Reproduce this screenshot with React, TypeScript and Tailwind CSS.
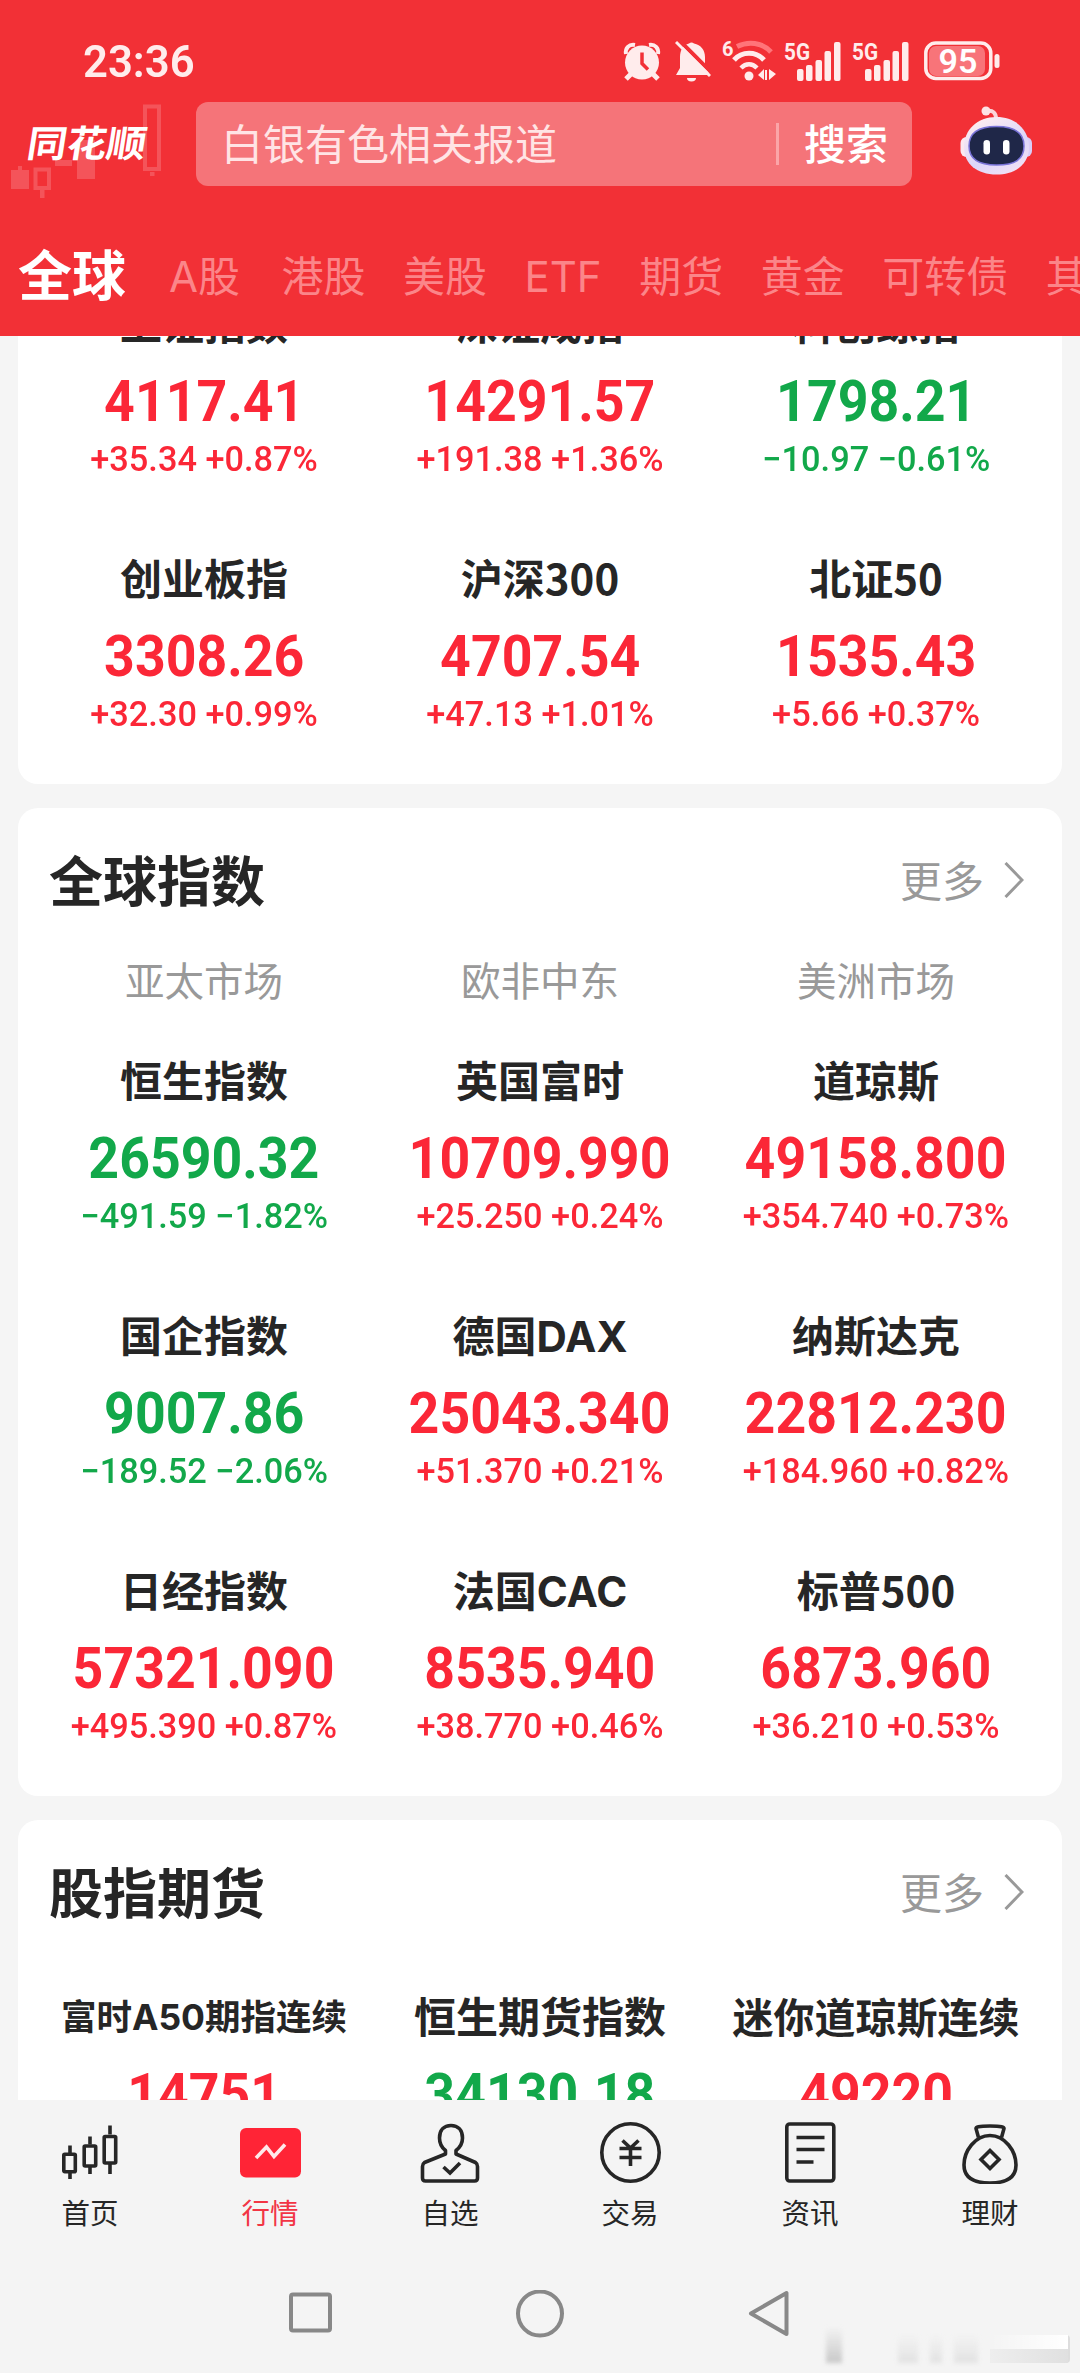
import React from 'react';

type Quote = {
  name: string;
  value: string;
  change: string;
  down?: boolean;
  nameClass?: string;
};

const domesticIndices: Quote[] = [
  { name: '上证指数', value: '4117.41', change: '+35.34 +0.87%' },
  { name: '深证成指', value: '14291.57', change: '+191.38 +1.36%' },
  { name: '科创综指', value: '1798.21', change: '−10.97 −0.61%', down: true },
  { name: '创业板指', value: '3308.26', change: '+32.30 +0.99%' },
  { name: '沪深300', value: '4707.54', change: '+47.13 +1.01%' },
  { name: '北证50', value: '1535.43', change: '+5.66 +0.37%' }
];

const globalIndices: Quote[] = [
  { name: '恒生指数', value: '26590.32', change: '−491.59 −1.82%', down: true },
  { name: '英国富时', value: '10709.990', change: '+25.250 +0.24%' },
  { name: '道琼斯', value: '49158.800', change: '+354.740 +0.73%' },
  { name: '国企指数', value: '9007.86', change: '−189.52 −2.06%', down: true },
  {
    name: '德国DAX',
    value: '25043.340',
    change: '+51.370 +0.21%',
    nameClass: "text-[42px] leading-[62px] font-['Inter','Noto_Sans_CJK_SC',sans-serif]"
  },
  { name: '纳斯达克', value: '22812.230', change: '+184.960 +0.82%' },
  { name: '日经指数', value: '57321.090', change: '+495.390 +0.87%' },
  {
    name: '法国CAC',
    value: '8535.940',
    change: '+38.770 +0.46%',
    nameClass: "text-[42px] leading-[62px] font-['Inter','Noto_Sans_CJK_SC',sans-serif]"
  },
  { name: '标普500', value: '6873.960', change: '+36.210 +0.53%' }
];

const futures: Quote[] = [
  {
    name: '富时A50期指连续',
    value: '14751',
    change: '',
    nameClass: "text-[35.5px] leading-[62px] font-['Inter','Noto_Sans_CJK_SC',sans-serif]"
  },
  { name: '恒生期货指数', value: '34130.18', change: '', down: true },
  { name: '迷你道琼斯连续', value: '49220', change: '', nameClass: 'text-[41px] leading-[56px]' }
];

const markets = ['亚太市场', '欧非中东', '美洲市场'];

const categories = ['A股', '港股', '美股', 'ETF', '期货', '黄金', '可转债', '其他'];

const AlarmIcon: React.FC = () => (
  <svg className="w-[38px] h-10 shrink-0" viewBox="0 0 38 40" fill="none">
    <circle cx="19" cy="21.500" r="17" fill="#ffecec" />
    <path d="M3 13C2 7 6 3 12 4M35 13C36 7 32 3 26 4" stroke="#ffecec" strokeWidth="4" />
    <path d="M8 33l-5 5M30 33l5 5" stroke="#ffecec" strokeWidth="5" />
    <path d="M19 11.500v11l6 6" stroke="#f23036" strokeWidth="3.500" />
  </svg>
);

const MutedBellIcon: React.FC = () => (
  <svg className="w-9 h-[42px] shrink-0" viewBox="0 0 36 42" fill="none">
    <path d="M14 3.500a3.500 3 0 0 1 5 0C26 5 30 10 30 17v9l5 9H1l4-7V17C5 10 8 5 14 3.500z" fill="#ffecec" />
    <path d="M12 38h9a4.500 3.500 0 0 1-9 0z" fill="#ffecec" />
    <path d="M4 0l34 34" stroke="#f23036" strokeWidth="4" />
    <path d="M1 2l34 34" stroke="#ffecec" strokeWidth="3" />
  </svg>
);

const WifiIcon: React.FC = () => (
  <svg className="w-[54px] h-[42px] shrink-0" viewBox="0 0 54 42" fill="none">
    <text x="0" y="16" fontFamily="Roboto" fontWeight="700" fontSize="20" fill="#ffecec">6</text>
    <path d="M15 6.500C26 1 40 2 49 12" stroke="#ff7479" strokeWidth="5" />
    <path d="M12 20c8-9 22-9 30 0" stroke="#ffecec" strokeWidth="5" />
    <path d="M19 28c5-5 11-5 16 0" stroke="#ffecec" strokeWidth="4.500" />
    <circle cx="27" cy="36" r="4.500" fill="#ffecec" />
    <path d="M42 29v11l-6-5zM43 30h2v10h-2zM47 29v11l7-6z" fill="#ffecec" />
  </svg>
);

const SignalIcon: React.FC = () => (
  <svg className="w-[57px] h-[42px] shrink-0" viewBox="0 0 57 42">
    <text x="0" y="19.500" fontFamily="Roboto" fontWeight="700" fontSize="24" fill="#ffecec" textLength="26" lengthAdjust="spacingAndGlyphs">5G</text>
    <rect x="13" y="29" width="6.500" height="12" rx="2" fill="#ffecec" />
    <rect x="22" y="25" width="6.500" height="16" rx="2" fill="#ffecec" />
    <rect x="31.500" y="20" width="6.500" height="21" rx="2" fill="#ffecec" />
    <rect x="40.500" y="11" width="6.500" height="30" rx="2" fill="#ffecec" />
    <rect x="50" y="2" width="6.500" height="39" rx="2" fill="#ffecec" />
  </svg>
);

const BatteryIcon: React.FC = () => (
  <svg className="w-[76px] h-[40px] shrink-0" viewBox="0 0 76 40">
    <rect x="5" y="5" width="56" height="30" rx="7" fill="#f87479" />
    <rect x="1.800" y="2" width="65" height="35.500" rx="10" fill="none" stroke="#ffecec" strokeWidth="3.500" />
    <rect x="70.500" y="13" width="5" height="14" rx="2.500" fill="#ffecec" />
    <text x="34" y="32" textAnchor="middle" fontFamily="Roboto" fontWeight="600" fontSize="34" fill="#ffffff">95</text>
  </svg>
);

const RobotIcon: React.FC = () => (
  <svg className="w-[72px] h-[69px]" viewBox="0 0 72 69" fill="none">
    <defs>
      <linearGradient id="shell" x1="0.200" y1="0" x2="0.800" y2="1">
        <stop offset="0" stopColor="#ffeef0" />
        <stop offset="0.600" stopColor="#dcd6fa" />
        <stop offset="1" stopColor="#f3e2f4" />
      </linearGradient>
    </defs>
    <path d="M27 5c6-1 9 2 9 8" stroke="#fbd5da" strokeWidth="4" />
    <circle cx="26" cy="5" r="4.500" fill="#fde3e6" />
    <rect x="0.500" y="31" width="12" height="20" rx="6" fill="#fbe8f0" />
    <rect x="60" y="31" width="12" height="20" rx="6" fill="#d9cdf8" />
    <path d="M36.500 11C56 11 69 24 69 41S56 68.500 36.500 68.500 4 58 4 41 17 11 36.500 11z" fill="url(#shell)" />
    <path d="M36.500 20.500c18 0 27.500 6 27.500 19.500S55 59 36.500 59 9 53 9 40s9-19.500 27.500-19.500z" fill="#1f2748" stroke="#7a74d8" strokeWidth="1.500" />
    <rect x="23.500" y="34" width="6.500" height="14.500" rx="3.200" fill="#fff" />
    <rect x="43" y="34" width="6.500" height="14.500" rx="3.200" fill="#fff" />
  </svg>
);

/* Brand mark with faint candlesticks behind the name */
const Logo: React.FC = () => (
  <svg className="w-[196px] h-[110px] shrink-0" viewBox="0 0 196 110" fill="none">
    <g fill="#f4545a">
      <rect x="11" y="80" width="18" height="19" />
      <rect x="18" y="76" width="4" height="5" />
      <rect x="55" y="70" width="17" height="6" />
      <rect x="77" y="50" width="18" height="39" />
      <rect x="40" y="100" width="4.500" height="8" />
      <rect x="150" y="82" width="4.500" height="4" />
    </g>
    <rect x="35.500" y="79.500" width="13.500" height="18.500" stroke="#f4545a" strokeWidth="4" />
    <rect x="145" y="16.500" width="14" height="62.500" stroke="#f4545a" strokeWidth="4" />
    <text
      transform="translate(25.500 66.500) skewX(-9)"
      fontFamily="Noto Sans CJK SC"
      fontWeight="700"
      fontSize="37"
      textLength="119"
      lengthAdjust="spacingAndGlyphs"
      fill="#ffffff"
    >
      同花顺
    </text>
  </svg>
);

const iconProps = {
  className: 'w-16 h-16',
  viewBox: '0 0 64 64',
  fill: 'none',
  stroke: '#262626',
  strokeWidth: 3.6,
  strokeLinejoin: 'round' as const
};

const HomeIcon: React.FC = () => (
  <svg {...iconProps}>
    <rect x="5.800" y="34.300" width="11.500" height="17.500" rx="1" />
    <path d="M12 25.500v8M12 52v7M32 16.500v8M32 46v8M52 5.500v9M52 43v11" />
    <rect x="26.200" y="26" width="11.500" height="20" rx="1" />
    <rect x="46.200" y="16.500" width="11.500" height="26.500" rx="1" />
  </svg>
);

const MarketIcon: React.FC = () => (
  <svg {...iconProps}>
    <rect x="2" y="8" width="61" height="49.500" rx="6" fill="#ff2436" stroke="none" />
    <path d="M18 38l10.500-11L36 36.500 47 24.500" stroke="#ffe9ea" strokeLinejoin="miter" />
  </svg>
);

const WatchlistIcon: React.FC = () => (
  <svg {...iconProps}>
    <path d="M27.500 30.500v3.500L6.500 42.500C5 43.500 4.500 44.500 4.500 46.500V58c0 2 1 3 3 3h49c2 0 3-1 3-3V46.500c0-2-.500-3-2-4L38 34v-3.500C42.500 27 44.500 23 44.500 18 44.500 10 40 5.500 33 5.500S21.500 10 21.500 18c0 5 1.500 9 6 12.500z" />
    <path d="M25.500 47l6.500 6 10-10" strokeLinejoin="miter" />
  </svg>
);

const TradeIcon: React.FC = () => (
  <svg {...iconProps}>
    <circle cx="32.500" cy="32.500" r="28.700" />
    <path d="M24.500 20.500l8 7.500 8-7.500M21.500 28.500h22M21.500 37.500h22M32.500 28v18" />
  </svg>
);

const NewsIcon: React.FC = () => (
  <svg {...iconProps}>
    <rect x="8.800" y="4" width="47" height="57" rx="3" />
    <path d="M18.500 17.500h28M18.500 29.500h28M18.500 42h17" />
  </svg>
);

const WealthIcon: React.FC = () => (
  <svg {...iconProps}>
    <path d="M20.500 17.500l-2.500-9C18 7 20 6 32 6s14 1 14 2.500l-2.500 9" />
    <path d="M32 15.500C17 15.500 6 31 6 45c0 12 8 18 26 18s26-6 26-18C58 31 47 15.500 32 15.500z" />
    <path d="M32 30.500l9 9-9 9-9-9z" strokeLinejoin="miter" />
  </svg>
);

const tabs = [
  { label: '首页', icon: HomeIcon },
  { label: '行情', icon: MarketIcon, active: true },
  { label: '自选', icon: WatchlistIcon },
  { label: '交易', icon: TradeIcon },
  { label: '资讯', icon: NewsIcon },
  { label: '理财', icon: WealthIcon }
];

const QuoteGrid: React.FC<{ items: Quote[] }> = ({ items }) => (
  <div className="grid grid-cols-3 gap-y-[68px]">
    {items.map((item) => (
      <div
        key={item.name}
        className={`flex flex-col items-center h-[187px] whitespace-nowrap ${item.down ? 'text-[#12a84a]' : 'text-[#fb2737]'}`}
      >
        <div className={`h-[60px] shrink-0 font-bold text-[#262626] ${item.nameClass || 'text-[42px] leading-[56px]'}`}>
          {item.name}
        </div>
        <div className="h-[60px] shrink-0 mt-[17px] leading-[60px] font-[Roboto] font-bold text-[58px] scale-x-[0.925]">
          {item.value}
        </div>
        <div className="h-10 shrink-0 mt-[9px] leading-10 font-[Roboto] font-medium text-[35px] scale-x-[0.98]">
          {item.change}
        </div>
      </div>
    ))}
  </div>
);

const SectionTitle: React.FC<{ title: string }> = ({ title }) => (
  <div className="flex items-center justify-between h-[143px] pb-[3px] pl-[31px] pr-[38px]">
    <h2 className="text-[54px] font-bold text-[#262626]">{title}</h2>
    <div className="flex items-center text-[42px] text-[#999999]">
      更多
      <svg className="w-5 h-9 ml-5 mt-[3px]" viewBox="0 0 20 36" fill="none">
        <path d="M1.500 1l16.500 17L1.500 35" stroke="#999999" strokeWidth="3" />
      </svg>
    </div>
  </div>
);

const App: React.FC = () => {
  return (
    <div className="w-[1080px] h-[2373px] flex flex-col overflow-hidden bg-[#f5f5f5] font-['Noto_Sans_CJK_SC',sans-serif]">
      {/* Header */}
      <header className="h-[336px] shrink-0 bg-[#f23036]">
        <div className="flex items-center h-[90px] pt-8 pl-[83px] pr-[80px] text-white">
          <span className="font-[Roboto] font-semibold text-[45px] leading-none text-[#ffecec] origin-left scale-x-[0.97]">
            23:36
          </span>
          <div className="flex items-center ml-auto">
            <AlarmIcon />
            <div className="w-[14px]" />
            <MutedBellIcon />
            <div className="w-[11px]" />
            <WifiIcon />
            <div className="w-2" />
            <SignalIcon />
            <div className="w-[11px]" />
            <SignalIcon />
            <div className="w-[15px]" />
            <BatteryIcon />
          </div>
        </div>
        <div className="flex h-[110px]">
          <Logo />
          <div className="flex items-center w-[716px] h-[84px] mt-3 rounded-xl bg-[#f57479] pl-[25px] pr-6 text-[42px]">
            <span className="pb-[5px] text-[#ffe4e5]">白银有色相关报道</span>
            <span className="w-[3px] h-[42px] ml-auto bg-[#fba5a8]" />
            <span className="pb-[5px] ml-[25px] font-medium text-white">搜索</span>
          </div>
          <div className="ml-12 mt-4">
            <RobotIcon />
          </div>
        </div>
        <nav className="flex items-center h-[136px] pt-[22px] pb-[14px] pl-[18px] whitespace-nowrap overflow-hidden">
          <span className="w-[113px] mr-[38px] text-[54px] font-bold text-white">全球</span>
          <div className="flex items-center gap-[37.5px] mt-2 text-[42px] text-[#fb8589] font-['Inter','Noto_Sans_CJK_SC',sans-serif]">
            {categories.map((category) => (
              <span key={category} className="first:pl-[5px] first:pr-[4px]">
                {category}
              </span>
            ))}
          </div>
        </nav>
      </header>

      {/* Scrolled quote cards */}
      <main className="h-[1764px] shrink-0 overflow-hidden px-[18px]">
        <section className="bg-white rounded-[20px] px-[18px] pb-12 -mt-[42px]">
          <QuoteGrid items={domesticIndices} />
        </section>

        <section className="bg-white rounded-[20px] mt-6 pb-12">
          <SectionTitle title="全球指数" />
          <div className="grid grid-cols-3 px-[18px] mb-11 text-center text-[39.5px] leading-[56px] text-[#999999]">
            {markets.map((market) => (
              <div key={market}>{market}</div>
            ))}
          </div>
          <div className="px-[18px]">
            <QuoteGrid items={globalIndices} />
          </div>
        </section>

        <section className="bg-white rounded-[20px] mt-6 pb-12">
          <SectionTitle title="股指期货" />
          <div className="px-[18px] mt-6">
            <QuoteGrid items={futures} />
          </div>
        </section>
      </main>

      {/* Tab bar */}
      <nav className="grid grid-cols-6 h-[150px] shrink-0 pt-5 bg-[#f4f4f4]">
        {tabs.map((tab) => {
          const Icon = tab.icon;
          return (
            <div key={tab.label} className="flex flex-col items-center">
              <Icon />
              <span className={`mt-2 text-[28.5px] leading-10 ${tab.active ? 'text-[#f23545]' : 'text-[#262626]'}`}>
                {tab.label}
              </span>
            </div>
          );
        })}
      </nav>

      {/* System navigation */}
      <div className="relative flex justify-center h-[123px] bg-[#f4f4f4] pt-10">
        <svg className="w-[510px] h-12" viewBox="0 0 510 48" fill="none" stroke="#888888" strokeWidth="4" strokeLinejoin="round">
          <rect x="6" y="4.500" width="39" height="36" rx="2" />
          <circle cx="255" cy="23.500" r="22" />
          <path d="M501.500 3v41L466 23.500z" />
        </svg>
        <div className="absolute right-[10px] bottom-[10px] flex items-end gap-3 h-9">
          <div className="w-4 h-9 bg-linear-to-t from-[#c8c8c8] to-transparent blur-[2px]" />
          <div className="w-8" />
          <div className="w-5 h-7 bg-linear-to-t from-[#e2e2e2] to-transparent blur-[2px]" />
          <div className="w-3 h-7 bg-linear-to-t from-[#e2e2e2] to-transparent blur-[2px]" />
          <div className="w-6 h-7 bg-linear-to-t from-[#e2e2e2] to-transparent blur-[2px]" />
          <div className="flex flex-col justify-end w-20 h-7 border-r-2 rounded-r border-[#dddddd]">
            <div className="h-[14px] bg-linear-to-l from-white to-transparent" />
            <div className="h-[14px] bg-linear-to-l from-[#e0e0e0] to-[#eeeeee]" />
          </div>
        </div>
      </div>
    </div>
  );
};

export default App;
